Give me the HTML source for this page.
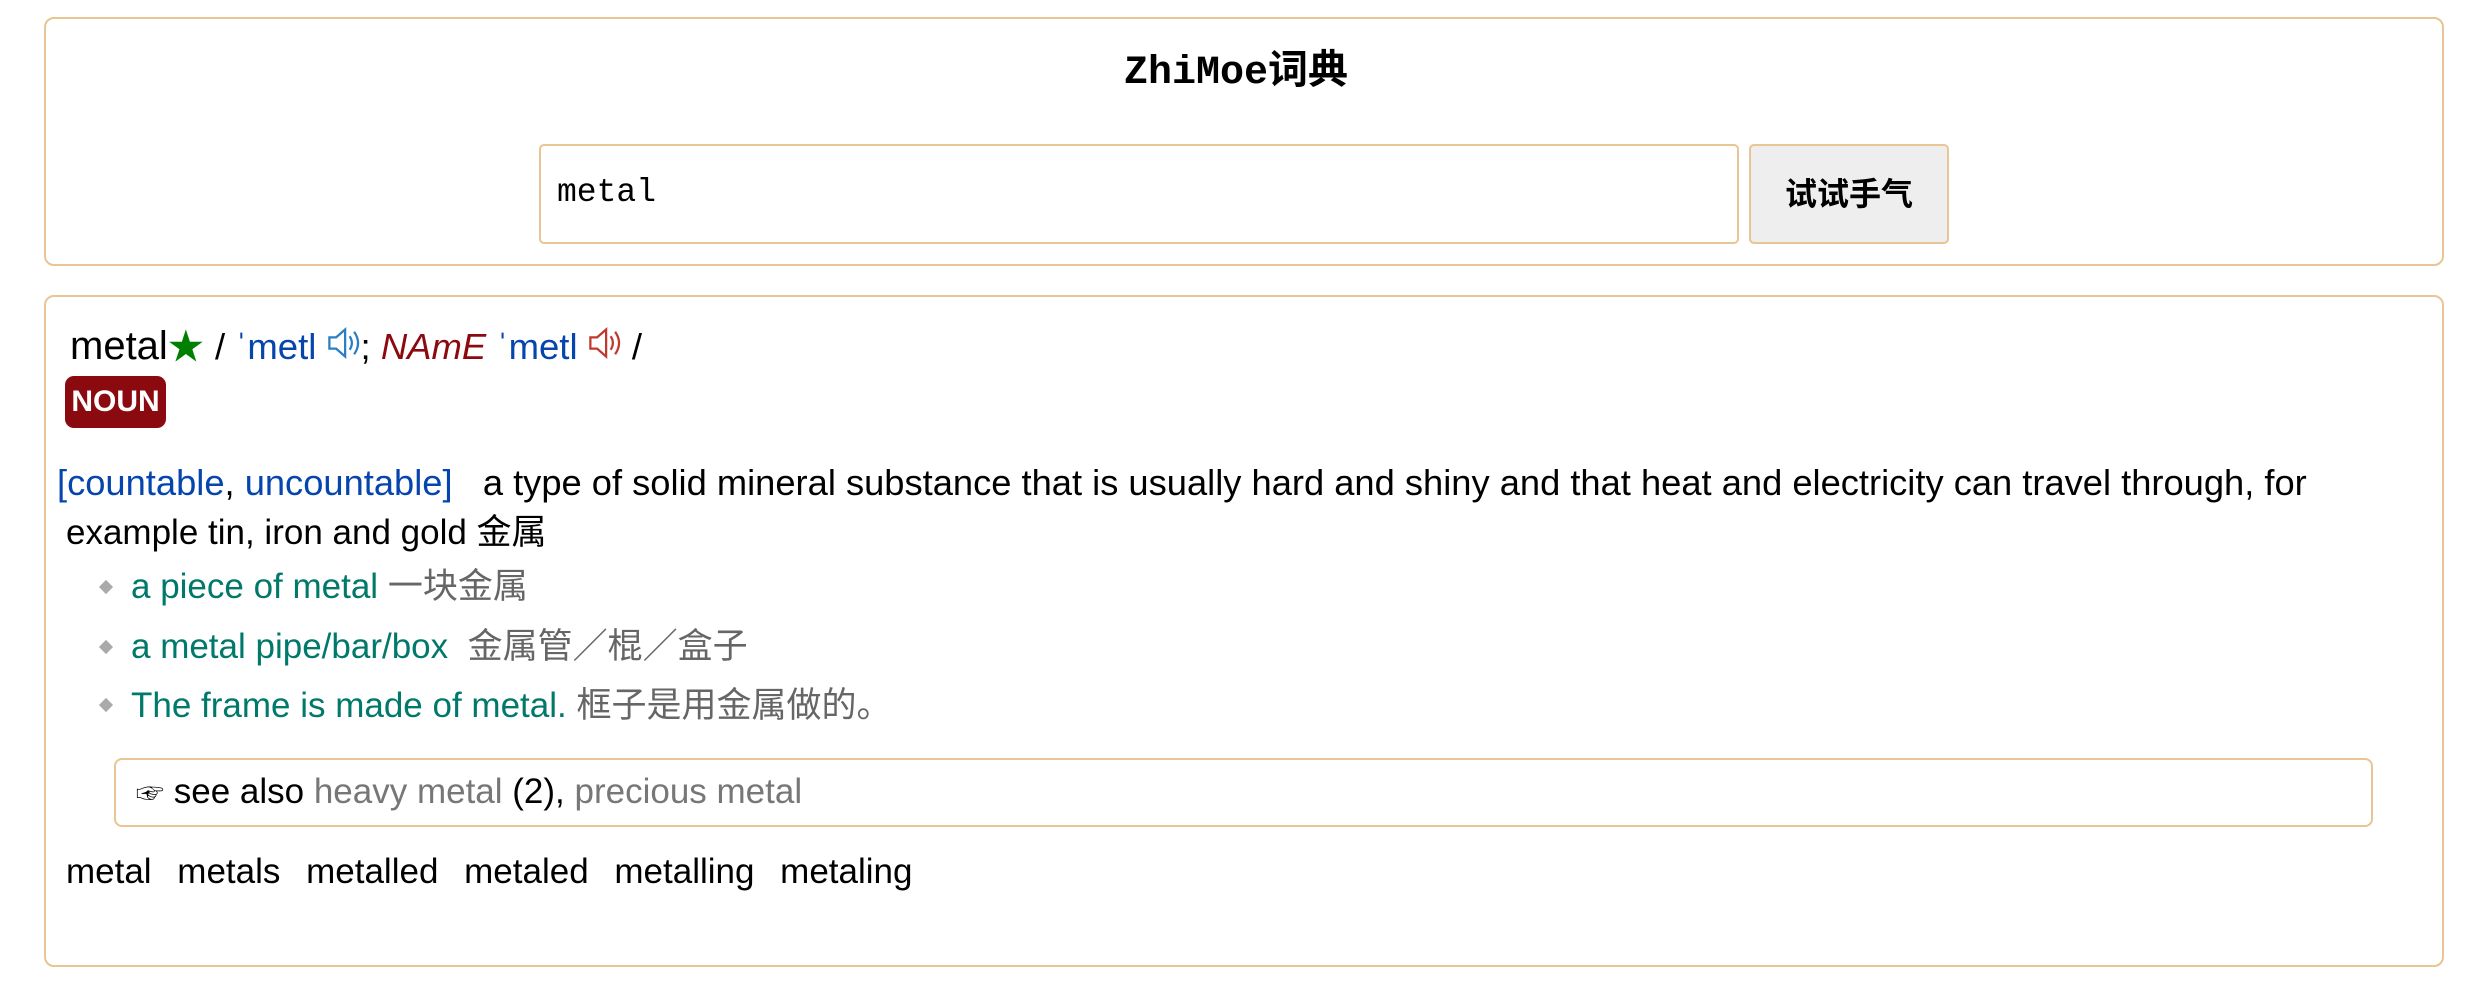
<!DOCTYPE html>
<html><head><meta charset="utf-8"><style>
body{margin:0;width:2486px;height:1008px;background:#fff;font-family:"Liberation Sans","Noto Sans CJK SC",sans-serif;position:relative;overflow:hidden;color:#000}
.box{position:absolute;border:2px solid #e8c592;border-radius:10px;box-sizing:border-box}
.a{position:absolute;white-space:nowrap;font-size:35px;line-height:40px}
.blue{color:#0645ad}.teal{color:#00796b}.gray{color:#666}.red{color:#8b0a0f}
.dia{position:absolute;width:10px;height:10px;background:#aaa;transform:rotate(45deg)}
</style></head><body>
<div class="box" style="left:44px;top:17px;width:2400px;height:249px"></div>
<div class="a" style="left:1124px;top:52px;font-family:'Liberation Mono','Noto Sans CJK SC',monospace;font-weight:bold;font-size:40px;line-height:44px">ZhiMoe词典</div>
<div class="box" style="left:539px;top:144px;width:1200px;height:100px;border-radius:5px;border-width:2px"></div>
<div class="a" style="left:557px;top:173px;font-family:'Liberation Mono',monospace;font-size:33px">metal</div>
<div class="box" style="left:1749px;top:144px;width:200px;height:100px;border-radius:5px;background:#eee"></div>
<div class="a" style="left:1785px;top:174px;font-weight:bold;font-size:32px">试试手气</div>

<div class="box" style="left:44px;top:295px;width:2400px;height:672px"></div>
<div class="a" style="left:70px;top:324px;font-size:40px;line-height:44px">metal<span style="color:#008000;font-size:36px">★</span> <span style="font-size:36.5px">/ <span class="blue">ˈmetl</span> <svg width="34" height="36" viewBox="0 0 30 32" style="vertical-align:-2px"><path d="M2 11h6l8-7v24l-8-7H2z" fill="none" stroke="#2a7fc4" stroke-width="2"/><path d="M20 10q4 6 0 12M24 6q7 10 0 20" fill="none" stroke="#2a7fc4" stroke-width="2"/></svg>; <i class="red">NAmE</i> <span class="blue">ˈmetl</span> <svg width="34" height="36" viewBox="0 0 30 32" style="vertical-align:-2px"><path d="M2 11h6l8-7v24l-8-7H2z" fill="none" stroke="#c0392b" stroke-width="2"/><path d="M20 10q4 6 0 12M24 6q7 10 0 20" fill="none" stroke="#c0392b" stroke-width="2"/></svg> /</span></div>
<div class="a" style="left:65px;top:376px;width:101px;height:52px;background:#8b0a0f;border-radius:9px;color:#fff;font-weight:bold;font-size:30px;line-height:52px;text-align:center">NOUN</div>
<div class="a" style="left:57px;top:463px;font-size:36.3px"><span class="blue">[countable</span>, <span class="blue">uncountable]</span> &nbsp; a type of solid mineral substance that is usually hard and shiny and that heat and electricity can travel through, for</div>
<div class="a" style="left:66px;top:513px">example tin, iron and gold 金属</div>
<div class="dia" style="left:101px;top:582px"></div>
<div class="a" style="left:131px;top:567px"><span class="teal">a piece of metal</span> <span class="gray">一块金属</span></div>
<div class="dia" style="left:101px;top:642px"></div>
<div class="a" style="left:131px;top:627px"><span class="teal">a metal pipe/bar/box</span> &nbsp;<span class="gray">金属管／棍／盒子</span></div>
<div class="dia" style="left:101px;top:700px"></div>
<div class="a" style="left:131px;top:686px"><span class="teal">The frame is made of metal.</span> <span class="gray">框子是用金属做的。</span></div>
<div class="box" style="left:114px;top:758px;width:2259px;height:69px;border-radius:8px"></div>
<div class="a" style="left:136px;top:772px"><span style="font-size:28px">☞</span> see also <span style="color:#777">heavy metal</span> (2), <span style="color:#777">precious metal</span></div>
<div class="a" style="left:66px;top:852px;word-spacing:16px">metal metals metalled metaled metalling metaling</div>
</body></html>
